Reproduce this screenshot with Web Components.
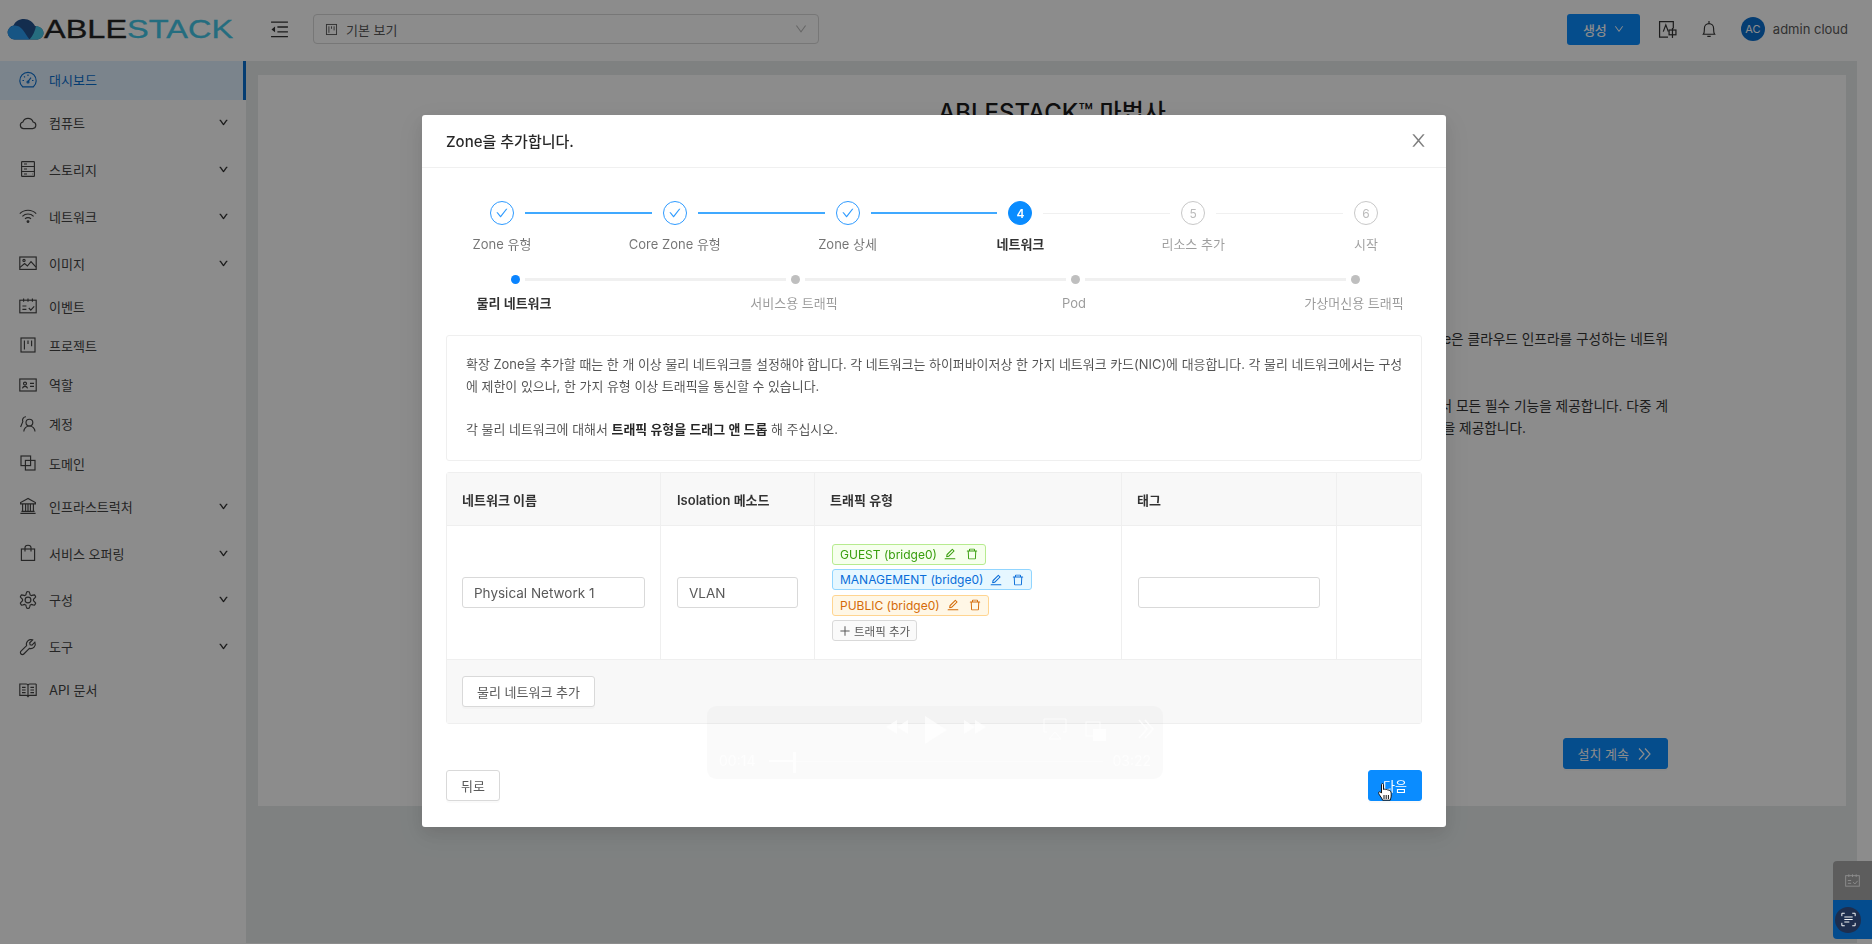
<!DOCTYPE html>
<html lang="ko">
<head>
<meta charset="utf-8">
<title>ABLESTACK</title>
<style>
  html, body { margin: 0; height: 100%; overflow: hidden; background: #fff; }
  body { font-family: Inter, "Noto Sans CJK KR", sans-serif; font-size: 13px; color: rgba(0,0,0,.65); }
</style>
</head>
<body>
<as-app>
  <as-header slot="header"></as-header>
  <as-sidebar slot="sidebar">
    <as-menu-item icon="dashboard" active>대시보드</as-menu-item>
    <as-menu-item icon="cloud" arrow>컴퓨트</as-menu-item>
    <as-menu-item icon="hdd" arrow>스토리지</as-menu-item>
    <as-menu-item icon="wifi" arrow>네트워크</as-menu-item>
    <as-menu-item icon="picture" arrow>이미지</as-menu-item>
    <as-menu-item icon="schedule">이벤트</as-menu-item>
    <as-menu-item icon="project">프로젝트</as-menu-item>
    <as-menu-item icon="idcard">역할</as-menu-item>
    <as-menu-item icon="team">계정</as-menu-item>
    <as-menu-item icon="block">도메인</as-menu-item>
    <as-menu-item icon="bank" arrow>인프라스트럭처</as-menu-item>
    <as-menu-item icon="shopping" arrow>서비스 오퍼링</as-menu-item>
    <as-menu-item icon="setting" arrow>구성</as-menu-item>
    <as-menu-item icon="tool" arrow>도구</as-menu-item>
    <as-menu-item icon="read">API 문서</as-menu-item>
  </as-sidebar>
  <as-landing></as-landing>
</as-app>

<as-mask></as-mask>

<as-modal heading="Zone을 추가합니다.">
  <as-steps></as-steps>
  <as-substeps></as-substeps>
  <as-notice>
    확장 Zone을 추가할 때는 한 개 이상 물리 네트워크를 설정해야 합니다. 각 네트워크는 하이퍼바이저상 한 가지 네트워크 카드(NIC)에 대응합니다. 각 물리 네트워크에서는 구성<br>에 제한이 있으나, 한 가지 유형 이상 트래픽을 통신할 수 있습니다.<br><br>각 물리 네트워크에 대해서 <b>트래픽 유형을 드래그 앤 드롭</b> 해 주십시오.
  </as-notice>
  <as-network-table></as-network-table>
  <as-button slot="back">뒤로</as-button>
  <as-button slot="next" variant="primary">다음</as-button>
</as-modal>

<as-video-hud></as-video-hud>
<as-cursor></as-cursor>
<as-floats></as-floats>

<script>
// 아이콘 모음 (ant 아이콘은 fill, 나머지는 18px stroke)
const ANT = {
  check: 'M912 190h-69.9c-9.8 0-19.1 4.5-25.1 12.2L404.7 724.5 207 474a32 32 0 0 0-25.1-12.2H112c-6.7 0-10.4 7.7-6.3 12.9l273.9 347c12.8 16.2 37.4 16.2 50.3 0l488.4-618.9c4.1-5.1.4-12.8-6.3-12.8z',
  close: 'M563.8 512l262.5-312.9c4.4-5.2.7-13.1-6.1-13.1h-79.8c-4.7 0-9.2 2.1-12.3 5.7L511.6 449.8 295.1 191.7c-3-3.6-7.5-5.7-12.3-5.7H203c-6.8 0-10.5 7.9-6.1 13.1L459.4 512 196.9 824.9A7.95 7.95 0 0 0 203 838h79.8c4.7 0 9.2-2.1 12.3-5.7l216.5-258.1 216.5 258.1c3 3.6 7.5 5.7 12.3 5.7h79.8c6.8 0 10.5-7.9 6.1-13.1L563.8 512z',
  down: 'M884 256h-75c-5.1 0-9.9 2.5-12.9 6.6L512 654.2 227.9 262.6c-3-4.1-7.8-6.6-12.9-6.6h-75c-6.5 0-10.3 7.4-6.5 12.7l352.6 486.1c12.8 17.6 39 17.6 51.7 0l352.6-486.1c3.9-5.3.1-12.7-6.4-12.7z',
  plus: 'M482 152h60q8 0 8 8v704q0 8-8 8h-60q-8 0-8-8V160q0-8 8-8zM176 474h672q8 0 8 8v60q0 8-8 8H176q-8 0-8-8v-60q0-8 8-8z',
  edit: 'M257.7 752c2 0 4-.2 6-.5L431.9 722c2-.4 3.9-1.3 5.3-2.8l423.9-423.9a9.96 9.96 0 0 0 0-14.1L694.9 114.9c-1.9-1.9-4.4-2.9-7.1-2.9s-5.2 1-7.1 2.9L256.8 538.8c-1.5 1.5-2.4 3.3-2.8 5.3l-29.5 168.2a33.5 33.5 0 0 0 9.4 29.8c6.6 6.4 14.9 9.9 23.8 9.9zm67.4-174.4L687.8 215l73.3 73.3-362.7 362.6-88.9 15.7 15.6-89zM880 836H144c-17.7 0-32 14.3-32 32v36c0 4.4 3.6 8 8 8h784c4.4 0 8-3.6 8-8v-36c0-17.7-14.3-32-32-32z',
  trash: 'M360 184h-8c4.4 0 8-3.6 8-8v8h304v-8c0 4.4 3.6 8 8 8h-8v72h72v-80c0-35.3-28.7-64-64-64H352c-35.3 0-64 28.7-64 64v80h72v-72zm504 72H160c-17.7 0-32 14.3-32 32v32c0 4.4 3.6 8 8 8h60.4l24.7 523c1.6 34.1 29.8 61 63.9 61h454c34.2 0 62.3-26.8 63.9-61l24.7-523H888c4.4 0 8-3.6 8-8v-32c0-17.7-14.3-32-32-32zM731.3 840H292.7l-24.2-512h487l-24.2 512z'
};
const ant = (name, size, color = 'currentColor') =>
  `<svg width="${size}" height="${size}" viewBox="64 64 896 896" fill="${color}" style="display:block;flex:none"><path d="${ANT[name]}"/></svg>`;

function gearPath() {
  let d = '';
  for (let i = 0; i < 48; i++) {
    const a = i / 48 * Math.PI * 2;
    const r = 6.9 + 1.4 * Math.max(-1, Math.min(1, Math.cos(a * 6) * 2));
    d += (i ? 'L' : 'M') + (9 + r * Math.sin(a)).toFixed(2) + ' ' + (9 - r * Math.cos(a)).toFixed(2);
  }
  return d + 'Z';
}

const LINE = {
  dashboard: '<path d="M3.6 15.8A8.2 8.2 0 1 1 14.4 15.8Z"/><path d="M9 10.6 12 6.6M3.5 9.5H5M13 9.5h1.5M9 3.4V5M5 5.4l1 1"/><circle cx="9" cy="11" r="1"/>',
  cloud: '<path d="M4.6 14.6h9a3.3 3.3 0 0 0 .5-6.55A5.4 5.4 0 0 0 3.9 8 3.35 3.35 0 0 0 4.6 14.6Z"/>',
  hdd: '<rect x="2.6" y="1.6" width="12.8" height="14.8" rx=".6"/><path d="M2.6 6.5h12.8M2.6 11.5h12.8M5 4h3M5 9h3M5 14h3M13 14h.5"/>',
  wifi: '<path d="M.8 6.6a11.6 11.6 0 0 1 16.4 0M3.4 9.3a7.9 7.9 0 0 1 11.2 0M6 11.9a4.2 4.2 0 0 1 6 0"/><circle cx="9" cy="14.6" r=".9" fill="currentColor"/>',
  picture: '<rect x=".8" y="3" width="16.4" height="12.4"/><circle cx="5" cy="6.4" r="1.1"/><path d="M1 13.4 5.6 9.6l2.8 2.4 3.6-4.4 5 5.6"/>',
  schedule: '<rect x=".8" y="3.2" width="16.4" height="12.6"/><path d="M4.6 1.6v3.2M9 1.6v3.2M13.4 1.6v3.2M3.4 9h4M3.4 12.4h4M9.8 11l2 2.2 3.4-3.8"/>',
  project: '<rect x="2" y="2" width="14" height="14"/><path d="M5.4 4.6v9M9 4.6v3.4M12.6 4.6v5.6"/>',
  idcard: '<rect x=".8" y="3" width="16.4" height="12"/><circle cx="6" cy="7.6" r="1.5"/><path d="M3.4 12.4a2.7 2.7 0 0 1 5.2 0M11 7.4h4M11 10.4h4"/>',
  team: '<circle cx="10.4" cy="7.6" r="3.4"/><path d="M4.8 16.6a5.6 5.6 0 0 1 11.2 0M7 1.8a3.4 3.4 0 0 0-3.2 4.8L1.6 12"/>',
  block: '<rect x="2" y="2" width="9.6" height="9.6"/><rect x="6.4" y="6.4" width="9.6" height="9.6"/>',
  bank: '<path d="M9 1.4 1.6 5.6v1.2h14.8V5.6ZM3.6 7v7M6.6 7v7M11.4 7v7M14.4 7v7M9 7v7M2.4 14.4h13.2M1.4 16.4h15.2"/>',
  shopping: '<rect x="2.4" y="5" width="13.2" height="11.4"/><path d="M6 7.6V3.6a3 2.4 0 0 1 6 0v4"/>',
  setting: `<path d="${gearPath()}"/><circle cx="9" cy="9" r="2.9"/>`,
  tool: '<path d="M15.9 4.2 13 7.1l-1.9-.4-.4-1.9 2.9-2.9a4.6 4.6 0 0 0-6 5.7L2 13.2a1.95 1.95 0 0 0 2.8 2.8l5.6-5.6a4.6 4.6 0 0 0 5.5-6.2Z"/>',
  read: '<path d="M.8 3h6.4C8.300 3 9 3.700 9 4.800v11.400c0-1.200-.7-1.800-1.800-1.800H.8ZM17.200 3h-6.400C9.700 3 9 3.700 9 4.800M17.200 3v11.400h-6.400c-1.100 0-1.800.6-1.800 1.800"/><path d="M3 6.400h3.600M3 9h3.600M3 11.600h3.600M11.400 6.400H15M11.400 9H15M11.400 11.600H15"/>',
  outdent: '<path d="M1 2h16M7 6.600h10M7 11.200h10M1 15.800h16"/><path d="M4.800 6.200v5.400L1.400 8.900Z" fill="currentColor" stroke="none"/>',
  translate: '<path d="M14.500 8V1.600H1.500v14.600h8"/><path d="M5 11 7.400 4.600 9.800 11"/><rect x="10.500" y="9.500" width="6.500" height="4.500"/><path d="M13.700 7.600v9.400"/>',
  bell: '<path d="M3.400 14.200c1-1.300 1-2.600 1-6a4.600 4.600 0 0 1 9.200 0c0 3.400 0 4.700 1 6ZM9 1v2.600M7.300 16.400h3.400"/>',
  scan: '<path d="M1 5V1.500h3.500M13.500 1.500H17V5M17 13v3.500h-3.500M4.500 16.500H1V13M4 6h10M4 9h10M4 12h6"/>'
};
const line = (name, size, width = 1.15) =>
  `<svg width="${size}" height="${size}" viewBox="0 0 18 18" fill="none" stroke="currentColor" stroke-width="${width}" style="display:block;flex:none">${LINE[name]}</svg>`;

class AsApp extends HTMLElement {
  constructor() {
    super();
    this.attachShadow({ mode: 'open' });
    this.shadowRoot.innerHTML = `
      <style>
        :host { display: grid; grid-template-columns: 246px 1fr; grid-template-rows: 61px 1fr; height: 943px; background: #e7ecec; }
        ::slotted([slot=header]) { grid-column: 1 / 3; }
      </style>
      <slot name="header"></slot>
      <slot name="sidebar"></slot>
      <slot></slot>`;
  }
}

class AsHeader extends HTMLElement {
  constructor() {
    super();
    this.attachShadow({ mode: 'open' });
    this.shadowRoot.innerHTML = `
      <style>
        :host { display: flex; align-items: center; background: #fff; padding: 0 24px 3px 0; color: #333; box-sizing: border-box; }
        .logo { width: 246px; flex: none; display: flex; align-items: center; padding-left: 7px; box-sizing: border-box; }
        .logo b { font: 400 25px/1 "Liberation Sans", sans-serif; display: inline-block; transform: scaleX(1.3); transform-origin: left; margin-left: 0; color: #242424; white-space: nowrap; -webkit-text-stroke: .3px currentColor; }
        .logo i { font-style: normal; color: #42c6e8; }
        .fold { margin-left: 24px; color: #333; }
        .select { margin-left: 24px; width: 506px; height: 30px; box-sizing: border-box; border: 1px solid #d9d9d9; border-radius: 4px; display: flex; align-items: center; padding: 0 11px; gap: 8px; color: #595959; font-size: 13px; }
        .select span { flex: 1; }
        .select .chev { color: #bbb; }
        .spacer { flex: 1; }
        .create { width: 73px; height: 31px; border-radius: 3px; background: #0a8cff; color: #fff; display: flex; align-items: center; justify-content: center; gap: 7px; font-size: 13px; font-weight: 500; box-sizing: border-box; }
        .act { margin-left: 18px; color: #333; }
        .bell { margin-left: 23px; }
        .avatar { margin-left: 23px; width: 24px; height: 24px; border-radius: 50%; background: #0a6fd0; color: #fff; font-size: 11px; display: flex; align-items: center; justify-content: center; }
        .who { margin-left: 8px; font-size: 13px; color: #595959; white-space: nowrap; }
      </style>
      <div class="logo">
        <svg width="37" height="22" viewBox="0 0 37 22" style="flex:none">
          <path d="M7.500 21.500a7 7 0 0 1-1-13.900C8 3.500 12 1 17 1c5 0 9 3 11 7 4.500.3 8.500 3 8.500 7 0 3.900-3.500 6.500-7 6.500Z" fill="#24528f"/>
          <path d="M7.500 21.500a7 7 0 1 1 3-13.400c4.500 1 7.500 7.500 12 13.400Z" fill="#2a9cf0"/>
          <path d="M22.500 21.500C26 18 28 13 29 8.100c4.300.5 7.500 3.100 7.500 6.900 0 3.900-3.500 6.500-7 6.500Z" fill="#46c6e8"/>
        </svg>
        <b>ABLE<i>STACK</i></b>
      </div>
      <div class="fold">${line('outdent', 19, 1.3)}</div>
      <div class="select">${line('project', 13, 1.3)}<span>기본 보기</span><div class="chev">${ant('down', 12)}</div></div>
      <div class="spacer"></div>
      <div class="create">생성 ${ant('down', 10)}</div>
      <div class="act">${line('translate', 19)}</div>
      <div class="act bell">${line('bell', 18)}</div>
      <div class="avatar">AC</div>
      <div class="who">admin cloud</div>`;
  }
}

class AsSidebar extends HTMLElement {
  constructor() {
    super();
    this.attachShadow({ mode: 'open' });
    this.shadowRoot.innerHTML = `
      <style>:host { display: flex; flex-direction: column; background: #fff; }</style>
      <slot></slot>`;
  }
}

class AsMenuItem extends HTMLElement {
  connectedCallback() {
    if (this.shadowRoot) return;
    this.attachShadow({ mode: 'open' });
    this.shadowRoot.innerHTML = `
      <style>
        :host { display: flex; align-items: center; height: 39.3px; box-sizing: border-box; padding: 0 18px 1.5px 19px; color: #444; font-size: 13px; flex: none; }
        :host([arrow]) { height: 46.8px; }
        :host([active]) { background: #e0f0ff; color: #0a6fd0; border-right: 3px solid #0a6fd0; height: 39px; }
        .label { margin-left: 12px; flex: 1; white-space: nowrap; }
        .chev { color: #222; }
        .chev svg { stroke: currentColor; stroke-width: 50; }
      </style>
      ${line(this.getAttribute('icon'), 18)}
      <span class="label"><slot></slot></span>
      ${this.hasAttribute('arrow') ? `<div class="chev">${ant('down', 9)}</div>` : ''}`;
  }
}

class AsButton extends HTMLElement {
  constructor() {
    super();
    this.attachShadow({ mode: 'open' });
    this.shadowRoot.innerHTML = `
      <style>
        :host { display: inline-flex; align-items: center; justify-content: center; height: 31px; padding: 0 14px; box-sizing: border-box; border: 1px solid #d9d9d9; border-radius: 3px; background: #fff; color: #595959; font-size: 13px; box-shadow: 0 2px 0 rgba(0,0,0,.02); white-space: nowrap; gap: 8px; }
        :host([variant=primary]) { background: #0a8cff; border-color: #0a8cff; color: #fff; }
      </style>
      <slot></slot>`;
  }
}

// 모달 뒤의 설치 마법사 첫 화면
class AsLanding extends HTMLElement {
  constructor() {
    super();
    this.attachShadow({ mode: 'open' });
    this.shadowRoot.innerHTML = `
      <style>
        :host { display: block; padding: 14px 11px 0 12px; border-right: 15px solid #fff; }
        .card { background: #fff; height: 731px; box-sizing: border-box; padding: 20px 178px 0; display: flex; flex-direction: column; color: #333; }
        h1 { margin: 0; font-size: 24px; line-height: 36px; font-weight: 500; text-align: center; color: #1a1a1a; }
        .ln { text-align: right; line-height: 22px; font-size: 13.7px; white-space: nowrap; }
        .p1 { margin-top: 197px; }
        .p2 { margin-top: 45px; }
        .short { margin-right: 142px; }
        .go { align-self: flex-end; margin-top: 299px; }
      </style>
      <div class="card">
        <h1>ABLESTACK™ 마법사</h1>
        <div class="ln p1">Zone은 클라우드 인프라를 구성하는 네트워</div>
        <div class="ln p2">Zone에서 모든 필수 기능을 제공합니다. 다중 계</div>
        <div class="ln short">기능을 제공합니다.</div>
        <as-button class="go" variant="primary">설치 계속 <svg width="16" height="14" viewBox="0 0 16 14" fill="none" stroke="currentColor" stroke-width="1.200" style="display:block"><path d="M2 1.500 7 7l-5 5.500M8 1.500 13 7l-5 5.500"/></svg></as-button>
      </div>`;
  }
}

class AsMask extends HTMLElement {
  constructor() {
    super();
    this.attachShadow({ mode: 'open' });
    this.shadowRoot.innerHTML = `<style>:host { position: fixed; inset: 0; background: rgba(0,0,0,.45); }</style>`;
  }
}

class AsModal extends HTMLElement {
  constructor() {
    super();
    this.attachShadow({ mode: 'open' });
    this.shadowRoot.innerHTML = `
      <style>
        :host { position: fixed; left: 422px; top: 115px; width: 1024px; height: 712px; background: #fff; border-radius: 3px; display: flex; flex-direction: column; box-shadow: 0 6px 16px rgba(0,0,0,.08), 0 9px 28px 8px rgba(0,0,0,.05); }
        header { height: 53px; box-sizing: border-box; border-bottom: 1px solid #f0f0f0; display: flex; align-items: center; justify-content: space-between; padding: 0 19px 1px 24px; font-size: 15px; font-weight: 500; color: rgba(0,0,0,.85); }
        header div { color: rgba(0,0,0,.5); }
        .body { flex: 1; padding: 33px 24px 0; display: flex; flex-direction: column; }
        footer { display: flex; justify-content: space-between; padding: 0 24px 26px; }
      </style>
      <header><span></span><div>${ant('close', 17)}</div></header>
      <div class="body"><slot></slot></div>
      <footer><slot name="back"></slot><slot name="next"></slot></footer>`;
  }
  connectedCallback() {
    this.shadowRoot.querySelector('header span').textContent = this.getAttribute('heading');
  }
}

const STEPS = ['Zone 유형', 'Core Zone 유형', 'Zone 상세', '네트워크', '리소스 추가', '시작'];

class AsSteps extends HTMLElement {
  constructor() {
    super();
    this.attachShadow({ mode: 'open' });
    const current = 3;
    const dots = STEPS.map((s, i) => {
      const state = i < current ? 'done' : i === current ? 'now' : 'wait';
      const inner = i < current ? ant('check', 12) : i + 1;
      const link = i < 5 ? `<i class="${i < current ? 'on' : ''}"></i>` : '';
      return `<div class="dot ${state}">${inner}</div>${link}`;
    }).join('');
    const labels = STEPS.map((s, i) => {
      const state = i < current ? 'done' : i === current ? 'now' : 'wait';
      return `<div class="lb ${state}" style="grid-column:${i * 2 + 1}">${s}</div>`;
    }).join('');
    this.shadowRoot.innerHTML = `
      <style>
        :host { display: grid; grid-template-columns: repeat(5, 24px 148.8px) 24px; margin-left: 44px; row-gap: 8px; align-items: center; }
        .dot { width: 24px; height: 24px; box-sizing: border-box; border-radius: 50%; border: 1px solid #c8c8c8; color: #bbb; display: flex; align-items: center; justify-content: center; font-size: 12px; grid-row: 1; }
        .dot.done { border-color: #2f9bff; color: #2f9bff; }
        .dot.now { background: #0a8cff; border-color: #0a8cff; color: #fff; font-weight: 600; }
        i { height: 1px; margin: 0 11px; background: #f0f0f0; grid-row: 1; }
        i.on { background: #40a9ff; height: 1.5px; }
        .lb { grid-row: 2; justify-self: center; white-space: nowrap; font-size: 13px; line-height: 22px; color: rgba(0,0,0,.55); }
        .lb.now { color: rgba(0,0,0,.8); font-weight: 700; }
        .lb.wait { color: rgba(0,0,0,.38); }
      </style>
      ${dots}${labels}`;
  }
}

class AsSubsteps extends HTMLElement {
  constructor() {
    super();
    this.attachShadow({ mode: 'open' });
    const names = ['물리 네트워크', '서비스용 트래픽', 'Pod', '가상머신용 트래픽'];
    const dots = names.map((n, i) => `<div class="dot ${i === 0 ? 'on' : ''}"></div>${i < 3 ? '<i></i>' : ''}`).join('');
    const labels = names.map((n, i) => `<div class="lb ${i === 0 ? 'on' : ''}" style="grid-column:${i * 2 + 1}">${n}</div>`).join('');
    this.shadowRoot.innerHTML = `
      <style>
        :host { display: grid; grid-template-columns: repeat(3, 9px 271px) 9px; margin: 20px 0 0 65px; row-gap: 8px; align-items: center; }
        .dot { width: 9px; height: 9px; border-radius: 50%; background: #bfbfbf; grid-row: 1; }
        .dot.on { background: #0a84ff; }
        i { height: 3px; margin: 0 5px; background: #f0f0f0; grid-row: 1; }
        .lb { grid-row: 2; justify-self: center; white-space: nowrap; font-size: 13px; line-height: 22px; color: rgba(0,0,0,.4); transform: translateX(-1.5px); }
        .lb.on { color: rgba(0,0,0,.8); font-weight: 600; }
      </style>
      ${dots}${labels}`;
  }
}

class AsNotice extends HTMLElement {
  constructor() {
    super();
    this.attachShadow({ mode: 'open' });
    this.shadowRoot.innerHTML = `
      <style>
        :host { display: block; margin-top: 21px; height: 126px; box-sizing: border-box; border: 1px solid #efefef; border-radius: 3px; padding: 18px 19px 0; font-size: 12.95px; line-height: 21.8px; color: rgba(0,0,0,.68); white-space: nowrap; }
        ::slotted(b) { color: rgba(0,0,0,.85); font-weight: 600; }
      </style>
      <slot></slot>`;
  }
}

class AsTag extends HTMLElement {
  connectedCallback() {
    if (this.shadowRoot) return;
    this.attachShadow({ mode: 'open' });
    this.shadowRoot.innerHTML = `
      <style>
        :host { display: inline-flex; align-items: center; height: 21px; box-sizing: border-box; padding: 0 7px; border: 1px solid; border-radius: 3px; font-size: 12px; white-space: nowrap; align-self: flex-start; }
        :host([color=green]) { background: #f6ffed; border-color: #b7eb8f; color: #389e0d; }
        :host([color=blue]) { background: #e6f7ff; border-color: #91d5ff; color: #096dd9; }
        :host([color=orange]) { background: #fff7e6; border-color: #ffd591; color: #d46b08; }
        :host([color=plain]) { background: #fafafa; border-color: #d9d9d9; color: #595959; padding: 0 6px; font-size: 11.5px; }
        .a { margin-left: 7px; }
        .b { margin-left: 10px; }
      </style>
      <slot></slot>
      ${this.hasAttribute('actions') ? `<span class="a">${ant('edit', 12)}</span><span class="b">${ant('trash', 12)}</span>` : ''}`;
  }
}

class AsNetworkTable extends HTMLElement {
  constructor() {
    super();
    this.attachShadow({ mode: 'open' });
    this.shadowRoot.innerHTML = `
      <style>
        :host { display: grid; grid-template-columns: 214px 154px 307px 215px 1fr; grid-template-rows: 53px 134px 1fr; margin-top: 11px; height: 252px; box-sizing: border-box; border: 1px solid #efefef; border-radius: 3px; font-size: 13px; }
        .h { background: #f8f8f8; display: flex; align-items: center; padding-left: 15px; font-weight: 600; color: rgba(0,0,0,.8); border-right: 1px solid #efefef; border-bottom: 1px solid #efefef; }
        .h.m { padding-left: 16px; }
        .c { display: flex; align-items: center; padding: 0 15px; border-right: 1px solid #efefef; border-bottom: 1px solid #efefef; }
        .c.m { padding: 0 16px; }
        .h:nth-child(6), .c:nth-child(11) { border-right: 0; }
        .tags { flex-direction: column; align-items: flex-start; justify-content: center; gap: 4.400px; padding-left: 17px; }
        .in { width: 100%; height: 31px; box-sizing: border-box; border: 1px solid #d9d9d9; border-radius: 3px; display: flex; align-items: center; padding: 0 11px; color: #595959; font-size: 13.500px; white-space: nowrap; }
        .foot { grid-column: 1 / 6; background: #f8f8f8; display: flex; align-items: center; padding-left: 15px; }
        .plus { display: inline-block; vertical-align: -1px; margin-right: 3px; }
      </style>
      <div class="h">네트워크 이름</div>
      <div class="h m">Isolation 메소드</div>
      <div class="h">트래픽 유형</div>
      <div class="h">태그</div>
      <div class="h"></div>
      <div class="c"><div class="in">Physical Network 1</div></div>
      <div class="c m"><div class="in">VLAN</div></div>
      <div class="c tags">
        <as-tag color="green" actions>GUEST (bridge0)</as-tag>
        <as-tag color="blue" actions>MANAGEMENT (bridge0)</as-tag>
        <as-tag color="orange" actions>PUBLIC (bridge0)</as-tag>
        <as-tag color="plain"><span class="plus">${ant('plus', 12)}</span>트래픽 추가</as-tag>
      </div>
      <div class="c m"><div class="in"></div></div>
      <div class="c"></div>
      <div class="foot"><as-button>물리 네트워크 추가</as-button></div>`;
  }
}

// 화면 녹화 때 같이 찍힌 재생 컨트롤 (거의 투명)
class AsVideoHud extends HTMLElement {
  constructor() {
    super();
    this.attachShadow({ mode: 'open' });
    this.shadowRoot.innerHTML = `
      <style>
        :host { position: fixed; left: 707px; top: 706px; width: 456px; height: 73px; border-radius: 9px; background: rgba(0,0,0,.02); color: #fff; font-size: 14px; }
        svg { position: absolute; left: 0; top: 0; opacity: .7; }
        span { position: absolute; top: 45px; line-height: 20px; opacity: .7; }
      </style>
      <svg width="456" height="73" fill="#fff">
        <path d="M190 14v14l-11-7ZM201 14v14l-11-7ZM218 10v28l22-14ZM257 14v14l11-7ZM268 14v14l11-7Z"/>
        <path d="M340 26h-3V13h22v13h-3M348 26l6 7h-12Z" fill="none" stroke="#fff"/>
        <rect x="379" y="16" width="14" height="14" fill="none" stroke="#fff"/><rect x="386" y="23" width="13" height="12"/>
        <path d="M432 14l8 9-8 9M438 14l8 9-8 9" fill="none" stroke="#fff" stroke-width="1.500"/>
        <rect x="62" y="55" width="334" height="1" opacity=".6"/><rect x="62" y="54" width="26" height="2"/><rect x="86" y="46" width="3" height="21"/>
      </svg>
      <span style="left:12px">00:14</span>
      <span style="right:12px">03:22</span>`;
  }
}

class AsCursor extends HTMLElement {
  constructor() {
    super();
    this.attachShadow({ mode: 'open' });
    this.shadowRoot.innerHTML = `
      <style>:host { position: fixed; left: 1378px; top: 783px; width: 14px; height: 18px; }</style>
      <svg width="14" height="18" viewBox="0 0 14 18">
        <path d="M3.500 1.500c0-1.200 2-1.200 2 0v5l.8-.3c.8-.2 1.200.1 1.300.4l.9-.1c.7 0 1 .3 1.100.6l.9 0c1 .1 2.200.8 2.500 2 .3 1.500.3 4 0 5.200-.2 1-.6 1.600-.8 2.900H4.600c-.4-1.500-1.400-2.700-2.400-4.200C1.400 11.800.5 10.700.6 9.600c.1-.9 1.200-1 2-.4l.9.9Z" fill="#fff" stroke="#111" stroke-width="1"/>
        <path d="M6 12v4M8.200 12v4M10.400 12v4" stroke="#111" stroke-width="1"/>
      </svg>`;
  }
}

class AsFloats extends HTMLElement {
  constructor() {
    super();
    this.attachShadow({ mode: 'open' });
    this.shadowRoot.innerHTML = `
      <style>
        :host { position: fixed; right: 0; top: 861px; width: 39px; display: flex; flex-direction: column; }
        div { height: 39px; display: flex; align-items: center; justify-content: center; }
        .cal { background: #5d5d5d; color: #8c8c8c; border-radius: 4px 0 0 0; }
        .scan { background: #044c8e; border-radius: 0 0 0 4px; justify-content: flex-start; padding-left: 2px; box-sizing: border-box; }
        .ring { width: 26px; height: 26px; border-radius: 50%; background: #1e2e4e; color: #fff; }
      </style>
      <div class="cal">${line('schedule', 15)}</div>
      <div class="scan"><div class="ring">${line('scan', 15)}</div></div>`;
  }
}

customElements.define('as-app', AsApp);
customElements.define('as-header', AsHeader);
customElements.define('as-sidebar', AsSidebar);
customElements.define('as-menu-item', AsMenuItem);
customElements.define('as-button', AsButton);
customElements.define('as-landing', AsLanding);
customElements.define('as-mask', AsMask);
customElements.define('as-modal', AsModal);
customElements.define('as-steps', AsSteps);
customElements.define('as-substeps', AsSubsteps);
customElements.define('as-notice', AsNotice);
customElements.define('as-tag', AsTag);
customElements.define('as-network-table', AsNetworkTable);
customElements.define('as-video-hud', AsVideoHud);
customElements.define('as-cursor', AsCursor);
customElements.define('as-floats', AsFloats);
</script>
</body>
</html>
